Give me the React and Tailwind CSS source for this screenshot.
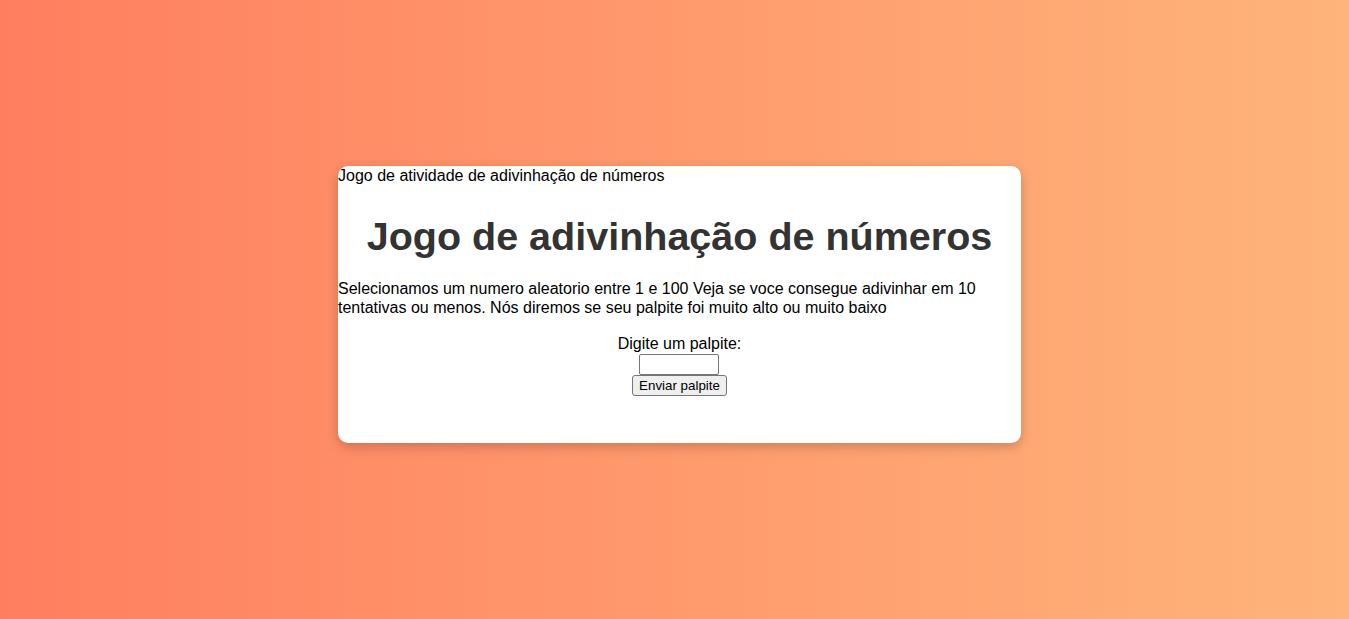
import React from "react";

export default function App() {
  return (
    <div
      className="w-full h-[619px] bg-gradient-to-r from-[#ff7e5f] to-[#feb47b] pt-[166px] pl-[338px]"
      style={{ fontFamily: '"Liberation Sans", Arial, sans-serif' }}
    >
      <div className="w-[683px] h-[277px] pt-px bg-white rounded-[10px] shadow-[0_4px_12px_rgba(0,0,0,0.2)] text-black text-[16px] leading-[18.4px]">
        <div>Jogo de atividade de adivinhação de números</div>
        <h1 className="text-center text-[39.5px] leading-[46px] font-bold text-[#333333] mt-[28px] mb-[21px]">
          Jogo de adivinhação de números
        </h1>
        <p>
          Selecionamos um numero aleatorio entre 1 e 100 Veja se voce consegue adivinhar em 10
          tentativas ou menos. Nós diremos se seu palpite foi muito alto ou muito baixo
        </p>
        <div className="mt-[18px] flex flex-col items-center">
          <label htmlFor="palpite">Digite um palpite:</label>
          <input
            id="palpite"
            type="text"
            className="w-[80px] h-[21px] -translate-x-px border border-[#767676] rounded-[2px] bg-white"
          />
          <button
            type="button"
            className="h-[21px] px-[6px] bg-[#efefef] border border-[#767676] rounded-[3px] text-[13.33px] leading-[15px] text-black"
          >
            Enviar palpite
          </button>
        </div>
      </div>
    </div>
  );
}
